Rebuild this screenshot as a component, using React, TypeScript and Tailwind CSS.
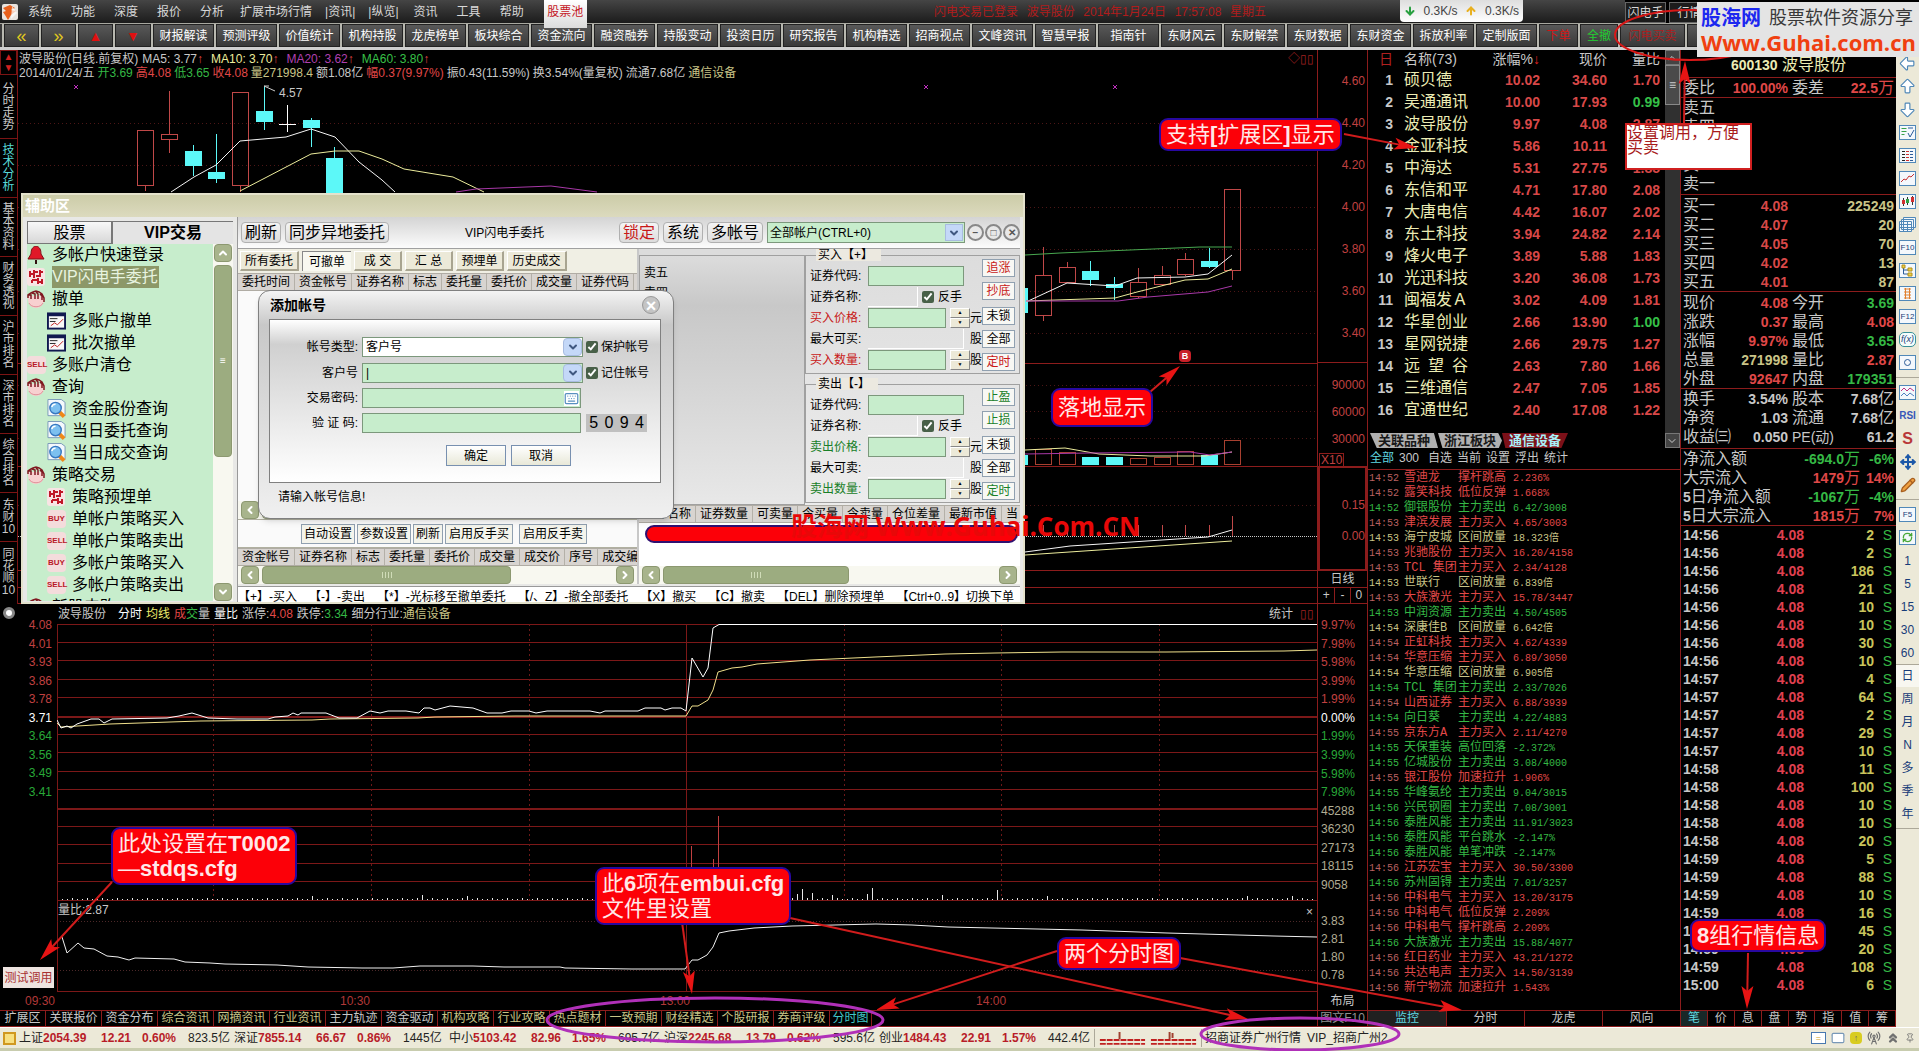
import React from 'react';
import {
  ArrowBigDown,
  ArrowBigLeft,
  ArrowBigUp,
  ArrowDown,
  ArrowUp,
  ChevronDown,
  ChevronLeft,
  ChevronRight,
  ChevronUp,
  ChevronsUp,
  Keyboard,
  Mail,
  Move,
  Pencil,
  Pin,
  RadioTower,
  RefreshCw,
} from 'lucide-react';

type Tone = 'r' | 'g' | 'y' | 'w';

const tones: Record<Tone, string> = {
  r: 'text-[#e04848]',
  g: 'text-[#35b845]',
  y: 'text-[#c9c487]',
  w: 'text-[#c8c8c8]',
};

const newsButtons = [
  '财报解读', '预测评级', '价值统计', '机构持股', '龙虎榜单', '板块综合', '资金流向', '融资融券',
  '持股变动', '投资日历', '研究报告', '机构精选', '招商视点', '文峰资讯', '智慧早报', '指南针',
  '东财风云', '东财解禁', '东财数据', '东财资金', '拆放利率', '定制版面',
];

const stocks = [
  ['硕贝德', '10.02', '34.60', '1.70'],
  ['吴通通讯', '10.00', '17.93', '0.99'],
  ['波导股份', '9.97', '4.08', '2.87'],
  ['金亚科技', '5.86', '10.11', '1.50'],
  ['中海达', '5.31', '27.75', '1.85'],
  ['东信和平', '4.71', '17.80', '2.08'],
  ['大唐电信', '4.42', '16.07', '2.02'],
  ['东土科技', '3.94', '24.82', '2.14'],
  ['烽火电子', '3.89', '5.88', '1.83'],
  ['光迅科技', '3.20', '36.08', '1.73'],
  ['闽福发Ａ', '3.02', '4.09', '1.81'],
  ['华星创业', '2.66', '13.90', '1.00'],
  ['星网锐捷', '2.66', '29.75', '1.27'],
  ['远\u2002望\u2002谷', '2.63', '7.80', '1.66'],
  ['三维通信', '2.47', '7.05', '1.85'],
  ['宜通世纪', '2.40', '17.08', '1.22'],
];

const monitor: [string, string, string, string, Tone][] = [
  ['14:52', '雪迪龙', '撑杆跳高', '2.236%', 'r'],
  ['14:52', '露笑科技', '低位反弹', '1.668%', 'r'],
  ['14:52', '御银股份', '主力卖出', '6.42/3008', 'g'],
  ['14:53', '津滨发展', '主力买入', '4.65/3003', 'r'],
  ['14:53', '海宁皮城', '区间放量', '18.323倍', 'y'],
  ['14:53', '兆驰股份', '主力买入', '16.20/4158', 'r'],
  ['14:53', 'TCL 集团', '主力买入', '2.34/4128', 'r'],
  ['14:53', '世联行', '区间放量', '6.839倍', 'y'],
  ['14:53', '大族激光', '主力买入', '15.78/3447', 'r'],
  ['14:53', '中润资源', '主力卖出', '4.50/4505', 'g'],
  ['14:54', '深康佳B', '区间放量', '6.642倍', 'y'],
  ['14:54', '正虹科技', '主力买入', '4.62/4339', 'r'],
  ['14:54', '华意压缩', '主力买入', '6.89/3050', 'r'],
  ['14:54', '华意压缩', '区间放量', '6.905倍', 'y'],
  ['14:54', 'TCL 集团', '主力卖出', '2.33/7026', 'g'],
  ['14:54', '山西证券', '主力买入', '6.88/3939', 'r'],
  ['14:54', '向日葵', '主力卖出', '4.22/4883', 'g'],
  ['14:55', '京东方A', '主力买入', '2.11/4270', 'r'],
  ['14:55', '天保重装', '高位回落', '-2.372%', 'g'],
  ['14:55', '亿城股份', '主力卖出', '3.08/4000', 'g'],
  ['14:55', '银江股份', '加速拉升', '1.906%', 'r'],
  ['14:55', '华峰氨纶', '主力卖出', '9.04/3015', 'g'],
  ['14:56', '兴民钢圈', '主力卖出', '7.08/3001', 'g'],
  ['14:56', '泰胜风能', '主力卖出', '11.91/3023', 'g'],
  ['14:56', '泰胜风能', '平台跳水', '-2.147%', 'g'],
  ['14:56', '泰胜风能', '单笔冲跌', '-2.147%', 'g'],
  ['14:56', '江苏宏宝', '主力买入', '30.50/3300', 'r'],
  ['14:56', '苏州固锝', '主力卖出', '7.01/3257', 'g'],
  ['14:56', '中科电气', '主力买入', '13.20/3175', 'r'],
  ['14:56', '中科电气', '低位反弹', '2.209%', 'r'],
  ['14:56', '中科电气', '撑杆跳高', '2.209%', 'r'],
  ['14:56', '大族激光', '主力卖出', '15.88/4077', 'g'],
  ['14:56', '红日药业', '主力买入', '43.21/1272', 'r'],
  ['14:56', '共达电声', '主力买入', '14.50/3139', 'r'],
  ['14:56', '新宁物流', '加速拉升', '1.543%', 'r'],
];

const ticks: [string, number][] = [
  ['14:56', 2], ['14:56', 2], ['14:56', 186], ['14:56', 21], ['14:56', 10], ['14:56', 10],
  ['14:56', 30], ['14:56', 10], ['14:57', 4], ['14:57', 64], ['14:57', 2], ['14:57', 29],
  ['14:57', 10], ['14:58', 11], ['14:58', 100], ['14:58', 10], ['14:58', 10], ['14:58', 20],
  ['14:59', 5], ['14:59', 88], ['14:59', 10], ['14:59', 16], ['14:59', 45], ['14:59', 20],
  ['14:59', 108], ['15:00', 6],
];

/* Latin runs are set bold and smaller than the Chinese around them */
function Mixed({ text }: { text: string }) {
  return (
    <>
      {text.split(/([!-~]+)/).map((part, i) =>
        i % 2 ? <b key={i} className="text-sm leading-none">{part}</b> : part,
      )}
    </>
  );
}

/* ---------- top bars ---------- */

function MenuBar() {
  return (
    <header className="flex h-[23px] items-center bg-gradient-to-b from-[#454545] to-[#1c1c1c] text-[#d8d8d8]">
      <svg viewBox="0 0 16 16" className="ml-[2px] size-[16px]">
        <rect width="16" height="16" rx="2" fill="#e9e4df" />
        <path d="M1 4 8 1l5 3-4 2 5 1-5 4-3 5-3-5-2-3 3-1z" fill="#e8601c" />
        <path d="m10 2 5 7-6 6z" fill="#fff" opacity=".7" />
      </svg>
      <nav className="flex items-center">
        <div className="ml-[10px] flex gap-[19px]">
          {['系统', '功能', '深度', '报价', '分析'].map((m) => <button key={m}>{m}</button>)}
        </div>
        <div className="ml-4 flex gap-[13px]">
          {['扩展市场行情', '|资讯|', '|纵览|'].map((m) => <button key={m}>{m}</button>)}
        </div>
        <div className="ml-[15px] flex gap-[19px]">
          {['资讯', '工具', '帮助'].map((m) => <button key={m}>{m}</button>)}
        </div>
      </nav>
      <button className="z-10 ml-[20px] h-[28px] w-[43px] self-start bg-gradient-to-b from-white to-[#dcdcdc] pb-1 text-[#c4141c]">股票池</button>
      <p className="mr-[134px] ml-auto flex w-[332px] justify-between text-[#b01c1c]">
        <span>闪电交易已登录</span><span>波导股份</span><span>2014年1月24日</span><span>17:57:08</span><span>星期五</span>
      </p>
      <p className="mr-[102px] flex h-[22px] w-[123px] items-center justify-around self-start rounded-b bg-gradient-to-b from-[#dedede] to-white text-[#444]">
        <ArrowDown className="size-3 text-[#28a040]" strokeWidth={4} />0.3K/s
        <ArrowUp className="size-3 text-[#e8b020]" strokeWidth={4} />0.3K/s
      </p>
      <div className="flex h-full w-[294px] gap-[3px] bg-black pt-[2px]">
        <button className="w-[41px] border border-[#666] bg-[#1c1c1c]">闪电手</button>
        <button className="w-[41px] border border-[#666] bg-[#1c1c1c]">行情</button>
      </div>
    </header>
  );
}

const barButton = 'h-[23px] shrink-0 border-l-2 border-[#b8b8b0] bg-gradient-to-b from-[#5a5a5a] to-[#383838] shadow-[inset_0_0_0_1px_#222]';

function NewsBar() {
  return (
    <nav className="flex h-[27px] overflow-hidden border-t border-b-[3px] border-t-[#a8a8a0] border-b-[#cfcfcf] bg-[#3a3a3a] pl-[2px] text-white">
      <button className={`${barButton} w-[37px] text-lg leading-none text-[#e0c820]`}>«</button>
      <button className={`${barButton} w-[37px] text-lg leading-none text-[#e0c820]`}>»</button>
      <button className={`${barButton} w-[37px] text-sm leading-none text-[#e01010]`}>▲</button>
      <button className={`${barButton} w-[38px] text-sm leading-none text-[#e01010]`}>▼</button>
      {newsButtons.map((b) => <button key={b} className={`${barButton} w-[63px]`}>{b}</button>)}
      <button className={`${barButton} w-[41px] text-[#d01818]`}>下单</button>
      <button className={`${barButton} w-[40px] text-[#20d030]`}>全撤</button>
      <button className={`${barButton} w-[67px] text-[#a82020]`}>闪电买卖</button>
      <button className={`${barButton} w-[63px] text-[#20d030]`}>跟踪</button>
    </nav>
  );
}

/* ---------- daily chart ---------- */

const sideTabs = ['技术分析', '基本资料', '财务透视', '沪市排名', '深市排名', '综合排名'];

function SideTabs() {
  return (
    <nav className="flex w-[18px] shrink-0 flex-col border-r border-[#7c1414] text-[#c8c8c8]">
      <div className="flex h-[25px] flex-col items-center justify-around border border-[#7c1414] text-[10px] leading-none text-[#d02020]">
        <span>▲</span><span>▼</span>
      </div>
      <button className="flex h-[64px] items-center justify-center border-b border-[#7c1414]"><span className="w-3 leading-3 break-all">分时走势</span></button>
      {sideTabs.map((t, i) => (
        <button key={t} className={`flex h-[59px] items-center justify-center border-b border-[#7c1414] ${i === 0 ? 'text-[#58d8d8]' : ''}`}>
          <span className="w-3 leading-3 break-all">{t}</span>
        </button>
      ))}
      <button className="flex h-[49px] items-center justify-center border-b border-[#7c1414]"><span className="w-[14px] leading-3">东财10</span></button>
      <button className="flex h-[60px] items-center justify-center"><span className="w-[14px] leading-3">同花顺10</span></button>
    </nav>
  );
}

// centre x, body top, body bottom, wick top, wick bottom, falling
type Candle = [number, number, number, number, number, boolean];

const candles: Candle[] = [
  [145, 130, 186, 130, 191, false],
  [169, 134, 140, 91, 153, false],
  [193, 151, 166, 145, 176, true],
  [216, 172, 179, 134, 183, true],
  [240, 92, 186, 92, 192, false],
  [264, 111, 122, 86, 130, true],
  [311, 120, 128, 118, 147, true],
  [334, 158, 200, 147, 200, true],
  [1019, 288, 313, 288, 313, true],
  [1043, 275, 316, 247, 321, false],
  [1067, 267, 283, 262, 283, false],
  [1090, 271, 280, 261, 286, true],
  [1114, 284, 288, 277, 300, true],
  [1138, 282, 297, 268, 298, false],
  [1162, 275, 285, 266, 286, false],
  [1185, 259, 275, 253, 276, false],
  [1209, 261, 267, 248, 268, true],
  [1232, 189, 271, 189, 280, false],
];

const volumes: [number, number, boolean][] = [
  [1019, 455, true], [1043, 449, false], [1067, 452, false], [1090, 457, true], [1114, 457, true],
  [1138, 458, false], [1162, 457, false], [1185, 451, false], [1209, 455, true], [1232, 440, false],
];

function DailyChart() {
  return (
    <svg viewBox="18 50 1299 554" preserveAspectRatio="none" className="absolute inset-0 size-full" fill="none" shapeRendering="crispEdges">
      <g stroke="#4c1616" strokeDasharray="1 3">
        {[123, 165, 207, 249, 291, 333, 385, 411, 438, 505].map((y) => <path key={y} d={`M18 ${y + 0.5}H1317`} />)}
      </g>
      <path d="M18 363.5H1317M18 466.5H1317M18 570.5H1317M18 587.5H1317M18 603.5H1317" stroke="#8c1c1c" />
      <path d="M18 536.5H1317" stroke="#c8c8c8" strokeDasharray="1 1" />
      {candles.map(([x, top, bottom, high, low, down]) => (
        <g key={x} stroke={down ? '#5cf8f8' : '#c04848'}>
          <path d={`M${x + 0.5} ${high}V${top}M${x + 0.5} ${bottom}V${low}`} />
          <rect x={x - 7.5} y={top + 0.5} width="16" height={bottom - top - 1} fill={down ? '#5cf8f8' : 'none'} />
        </g>
      ))}
      <path d="M287.5 105V132M279 124.5H296" stroke="#fff" />
      {volumes.map(([x, top, down]) => (
        <rect key={x} x={x - 7.5} y={top + 0.5} width="16" height={465 - top - 1} stroke={down ? '#5cf8f8' : '#a84030'} fill={down ? '#5cf8f8' : 'none'} />
      ))}
      <path d="M1043.5 525V536M1067.5 525V536M1090.5 525V536M1114.5 525V536M1138.5 525V536M1162.5 525V536M1185.5 525V536M1209.5 525V536M1232.5 516V536" stroke="#c04848" />
      <g shapeRendering="auto">
        <path d="M171 192 194 177 216 165 240 141 286 137 311 129 335 137 359 162 382 180 395 192M1026 302 1067 283 1115 286 1137 278 1185 277 1208 274 1232 255M1025 552 1070 546 1208 537 1232 530" stroke="#f4f4f4" />
        <path d="M240 191 265 178 311 154 335 151H359L382 159 404 169 453 177 484 192M1026 301 1115 298 1137 292 1185 280 1208 279 1232 269M1025 450 1065 448 1099 454 1150 456H1205L1232 452M1025 555 1232 541" stroke="#ecec9c" />
        <path d="M456 192 476 189 551 186 597 192M1026 301H1118L1148 297 1208 292 1232 286M1025 454 1090 453 1190 452 1210 455 1232 452" stroke="#a838a8" />
        <path d="M1025 255 1060 253 1130 250 1200 247H1232" stroke="#48a850" />
        <path d="M264 86 275 91M264 86 269 86" stroke="#ccc" />
      </g>
      <path d="m74 85 4 4m0-4-4 4M924 85l4 4m0-4-4 4M1113 85l4 4m0-4-4 4" stroke="#c030c0" />
    </svg>
  );
}

const up = <span className="mr-2 text-[#e04848]">↑</span>;

function DailyPanel() {
  return (
    <section className="flex h-[554px]">
      <SideTabs />
      <div className="relative min-w-0 flex-1">
        <DailyChart />
        <div className="relative pt-[2px] pl-[1px] leading-[14px] text-[#c8c8c8]">
          <p className="flex"><span className="mr-1">波导股份(日线.前复权)</span> MA5: 3.77{up}
            <span className="text-[#ecec9c]">MA10: 3.70</span>{up}
            <span className="text-[#b040b0]">MA20: 3.62</span>{up}
            <span className="text-[#38c048]">MA60: 3.80</span>{up}
          </p>
          <p className="flex gap-[3px]">
            <span>2014/01/24/五</span>
            <span className={tones.g}>开3.69</span>
            <span className={tones.r}>高4.08</span>
            <span className={tones.g}>低3.65</span>
            <span className={tones.r}>收4.08</span>
            <span className={tones.y}>量271998.4</span>
            <span>额1.08亿</span>
            <span className={tones.r}>幅0.37(9.97%)</span>
            <span>振0.43(11.59%)</span>
            <span>换3.54%(量复权)</span>
            <span>流通7.68亿</span>
            <span className={tones.y}>通信设备</span>
          </p>
        </div>
        <span className="absolute top-[35px] left-[261px] text-[#c8c8c8]">4.57</span>
        <span className="absolute top-[1px] right-[3px] text-[#a02020]">◇▯▯</span>
        <span className="absolute top-[300px] right-[126px] size-[12px] rounded-sm bg-[#c82028] text-center text-[9px] leading-[12px] font-bold text-white">B</span>
      </div>
      <div className="flex w-[51px] shrink-0 flex-col border-x border-[#8c1c1c] text-right text-[#c04040]">
        <div className="h-[313px] border-b border-[#8c1c1c] pt-[10px]">
          {['4.60', '4.40', '4.20', '4.00', '3.80', '3.60', '3.40'].map((v) => <p key={v} className="h-[42px] pr-[2px] leading-[42px]">{v}</p>)}
        </div>
        <div className="h-[103px] pt-[9px]">
          {['90000', '60000', '30000'].map((v) => <p key={v} className="h-[27px] pr-[2px] leading-[27px]">{v}</p>)}
          <span className="float-left ml-[1px] border border-[#8c1c1c] px-[1px] leading-[13px]">X10</span>
        </div>
        <div className="flex h-[105px] flex-col gap-[15px] border-2 border-[#8c1c1c] pt-[29px] leading-4">
          <span>0.15</span><span>0.00</span>
        </div>
        <button className="h-[16px] text-[#c8c8c8]">日线</button>
        <div className="grid h-[17px] grid-cols-3 border-y border-[#8c1c1c] leading-[15px] text-[#c8c8c8]">
          <button>+</button><button className="border-x border-[#8c1c1c]">-</button><button>0</button>
        </div>
      </div>
    </section>
  );
}

/* ---------- intraday chart ---------- */

const priceLine =
  '57,720 61,728 67,726 71,728 77,724 91,719 99,719 104,723 112,719 167,718 179,716 192,713 208,718 237,719 268,719 275,717 288,716 293,713 298,715 301,713 326,713 339,718 357,718 370,711 380,713 388,711 406,711 419,713 424,708 430,708 435,710 450,706 473,708 487,713 502,713 511,711 529,711 536,713 547,711 590,711 600,713 605,711 638,711 645,708 661,708 665,710 672,708 681,708 686,711 692,658 703,677 708,668 713,628 719,624.5 1317,624.5';
const averageLine =
  '57,723 61,727 94,725 110,724 200,721 312,720 330,719 418,718 435,717 516,716 686,716 692,706 698,706 708,700 713,690 718,672 732,668 742,667 757,664 810,660 875,657 945,654 995,653 1062,652 1166,652 1284,651 1317,650';
const ratioLine =
  '62,937 67,953 78,943 84,948 94,949 107,956 118,957 129,960 135,958 174,959 185,962 210,963 225,964 277,965 308,967 362,968 393,968 420,966 473,966 504,967 560,967 565,968 632,969 685,969 692,960 698,960 707,955 713,947 719,933 729,931 754,928 792,926 876,924 912,925 948,927 992,928 1082,930 1167,933 1238,935 1274,936 1317,937';
const volumeSpikes: Record<number, number> = { 797: 6, 802: 11, 812: 7, 832: 5, 872: 12, 867: 6, 942: 5, 997: 10, 1047: 4, 1247: 4, 1292: 4, 312: 4, 422: 5, 467: 4 };

function IntradayChart() {
  const bars = Array.from({ length: 251 }, (_, i) => 62 + i * 5);
  return (
    <svg viewBox="57 604 1260 388" preserveAspectRatio="none" className="absolute inset-0 size-full" fill="none" shapeRendering="crispEdges">
      <g stroke="#7c1818">
        {[624, 642, 660, 679, 697, 734, 752, 771, 789, 826, 844, 863, 881, 900].map((y) => <path key={y} d={`M57 ${y + 0.5}H1317`} />)}
        <path d="M686.5 624V992M57.5 624V992M57 991.5H1317" />
      </g>
      <path d="M57 717H1317M57 809H1317" stroke="#7c1818" strokeWidth="2" />
      <g stroke="#6c1818" strokeDasharray="2 3">
        {[213, 371, 529, 844, 1001, 1159].map((x) => <path key={x} d={`M${x + 0.5} 624V900`} />)}
      </g>
      <path d="M57 921.5H1317M57 970.5H1317" stroke="#4c2828" strokeDasharray="1 2" />
      {bars.map((x) => <path key={x} d={`M${x + 0.5} ${900 - (volumeSpikes[x] ?? (x % 3 ? 1 : 2))}V900`} stroke="#e8e8e8" />)}
      <path d="M691.5 846V900M713.5 859V900M718.5 816V900" stroke="#c04040" />
      <polyline points={averageLine} stroke="#f0e08c" shapeRendering="auto" />
      <polyline points={priceLine} stroke="#fff" shapeRendering="auto" />
      <polyline points={ratioLine} stroke="#f0f0f0" shapeRendering="auto" />
    </svg>
  );
}

const leftScale = ['4.08', '4.01', '3.93', '3.86', '3.78', '3.71', '3.64', '3.56', '3.49', '3.41'];
const rightScale = ['9.97%', '7.98%', '5.98%', '3.99%', '1.99%', '0.00%', '1.99%', '3.99%', '5.98%', '7.98%'];
const scaleTone = (i: number) => (i < 5 ? 'text-[#c04040]' : i === 5 ? 'text-white' : 'text-[#28a838]');

function IntradayPanel() {
  return (
    <section className="flex h-[388px]">
      <div className="flex w-[57px] shrink-0 flex-col pr-[5px] text-right">
        <span className="ml-[3px] flex h-[12px] w-[12px] items-start pt-[3px]"><i className="size-[12px] shrink-0 rounded-full border-[3px] border-[#888] bg-white" /></span>
        <div className="flex h-[185px] flex-col">
          {leftScale.map((v, i) => <p key={v} className={`flex flex-1 items-center justify-end ${scaleTone(i)}`}>{v}</p>)}
        </div>
        <button className="mt-[166px] ml-[3px] h-[21px] w-[51px] bg-[#eee4e0] text-center text-[#a83030]">测试调用</button>
      </div>
      <div className="relative min-w-0 flex-1 text-[#c8c8c8]">
        <IntradayChart />
        <p className="relative flex h-5 items-center gap-1 pl-[1px]">
          <span className="mr-2">波导股份</span>
          <span className="text-white">分时</span>
          <span className="text-[#ecec6c]">均线</span>
          <span><span className={tones.r}>成</span><span className={tones.g}>交</span>量</span>
          <span className="text-white">量比</span>
          <span>涨停:<span className={tones.r}>4.08</span></span>
          <span>跌停:<span className={tones.g}>3.34</span></span>
          <span>细分行业:<span className={tones.y}>通信设备</span></span>
          <button className="ml-auto">统计</button>
          <span className="mr-[3px] ml-[3px] text-[#a02020]">▯▯</span>
        </p>
        <p className="absolute top-[298px] left-[1px]">量比:2.87</p>
        <button className="absolute top-[300px] right-[4px]">×</button>
      </div>
      <div className="w-[51px] shrink-0 border-x border-[#8c1c1c] pt-[12px] pl-[3px]">
        <div className="flex h-[278px] flex-col text-[#b0ac94]">
          {rightScale.map((v, i) => <p key={i} className={`flex flex-1 items-center ${scaleTone(i)}`}>{v}</p>)}
          {['45288', '36230', '27173', '18115', '9058'].map((v) => <p key={v} className="flex flex-1 items-center">{v}</p>)}
        </div>
        <div className="mt-[18px] text-[#b0ac94]">
          {['3.83', '2.81', '1.80', '0.78'].map((v) => <p key={v} className="h-[18px] leading-[18px]">{v}</p>)}
        </div>
      </div>
    </section>
  );
}

const pageTabs: [string, string][] = [
  ['关联报价', 'text-[#c8c8c8]'], ['资金分布', 'text-[#c8c8c8]'], ['综合资讯', 'text-[#c9c487]'],
  ['网摘资讯', 'text-[#c9c487]'], ['行业资讯', 'text-[#c9c487]'], ['主力轨迹', 'text-[#c8c8c8]'],
  ['资金驱动', 'text-[#c8c8c8]'], ['机构攻略', 'text-[#c9c487]'], ['行业攻略', 'text-[#c9c487]'],
  ['热点题材', 'text-[#c9c487]'], ['一致预期', 'text-[#c9c487]'], ['财经精选', 'text-[#c9c487]'],
  ['个股研报', 'text-[#c9c487]'], ['券商评级', 'text-[#c9c487]'],
];

function ChartFooter() {
  return (
    <>
      <div className="flex h-[18px] items-center text-[#b03838]">
        <span className="w-[315px] pl-[25px]">09:30</span>
        <span className="w-[25px] grow-0 pl-[25px]">10:30</span>
        <span className="ml-[320px]">13:00</span>
        <span className="ml-[286px]">14:00</span>
        <button className="ml-auto h-full w-[51px] border-x border-[#8c1c1c] text-[#c8c8c8]">布局</button>
      </div>
      <nav className="flex h-[17px] border-y border-[#8c1c1c] leading-[15px] text-[#c8c8c8]">
        <button className="w-[45px]">扩展区</button>
        {pageTabs.map(([t, tone]) => <button key={t} className={`w-[56px] border-l border-[#8c1c1c] ${tone}`}>{t}</button>)}
        <button className="w-[43px] border-x border-[#8c1c1c] text-[#40c8c8]">分时图</button>
        <button className="ml-auto w-[51px] border-x border-[#8c1c1c] text-[#909090]">图文F10</button>
      </nav>
    </>
  );
}

/* ---------- stock list ---------- */

function StockList() {
  return (
    <section className="flex w-[312px] shrink-0 flex-col">
      <div className="flex h-[398px]">
        <div className="flex flex-1 flex-col">
          <table className="w-[292px] table-fixed text-right">
            <colgroup><col className="w-[25px]" /><col className="w-[87px]" /><col className="w-[60px]" /><col className="w-[67px]" /><col className="w-[53px]" /></colgroup>
            <thead className="text-sm text-[#c8c8c8]">
              <tr className="h-[19px] leading-[19px]">
                <th className="font-normal text-[#b02020]">日</th>
                <th className="pl-[11px] text-left font-normal">名称(73)</th>
                <th className="font-normal whitespace-nowrap">涨幅%<span className="text-[#e02020]">↓</span></th>
                <th className="font-normal">现价</th>
                <th className="font-normal">量比</th>
              </tr>
            </thead>
            <tbody className="text-sm font-bold text-[#d84848]">
              {stocks.map(([name, change, price, ratio], i) => (
                <tr key={name} className="h-[22px] leading-[22px]">
                  <td className="text-[#c8c8c8]">{i + 1}</td>
                  <td className="pl-[11px] text-left text-base leading-[22px] font-normal text-[#ececb4]">{name}</td>
                  <td>{change}</td>
                  <td>{price}</td>
                  <td className={Number(ratio) > 1 ? '' : 'text-[#35c048]'}>{ratio}</td>
                </tr>
              ))}
            </tbody>
          </table>
          <nav className="mt-auto flex h-[15px] pl-[2px] text-[13px] leading-[15px] font-bold">
            <button className="h-[15px] w-[68px] bg-[#b0b0b0] text-[#181818] [clip-path:polygon(0_0,94%_0,100%_100%,10%_100%)]">关联品种</button>
            <button className="h-[15px] w-[64px] bg-[#b0b0b0] text-[#181818] [clip-path:polygon(0_0,94%_0,100%_50%,95%_100%,7%_100%)]">浙江板块</button>
            <button className="h-[15px] w-[66px] bg-[#7c1018] text-[#a8f0f8] [clip-path:polygon(0_0,100%_0,90%_100%,5%_100%)]">通信设备</button>
          </nav>
        </div>
        <div className="flex w-[15px] flex-col justify-between bg-[#303030]">
          <div>
            <button aria-label="上翻" className="block h-[15px] w-full border border-[#777] bg-[#444] text-[#ccc]"><ChevronUp className="size-3" /></button>
            <div className="flex h-[40px] items-center justify-center border border-[#888] bg-[#4a4a4a] text-[#ccc]">≡</div>
          </div>
          <button aria-label="下翻" className="h-[15px] border border-[#777] bg-[#444] text-[#ccc]"><ChevronDown className="size-3" /></button>
        </div>
      </div>
      <nav className="flex h-[22px] items-center gap-[5px] border-b border-[#8c1c1c] pb-[2px] pl-[2px] text-[#c8c8c8]">
        <button className="text-[#60d8e0]">全部</button><button className="mr-1">300</button>
        {['自选', '当前', '设置', '浮出', '统计'].map((t) => <button key={t}>{t}</button>)}
      </nav>
      <table className="mt-[1px] mr-auto w-[280px] table-fixed font-['Liberation_Mono','Noto_Sans_CJK_SC',monospace]">
        <colgroup><col className="w-[36px]" /><col className="w-[54px]" /><col className="w-[55px]" /><col /></colgroup>
        <tbody>
          {monitor.map(([time, name, action, value, tone], i) => (
            <tr key={i} className={`h-[15px] leading-[15px] whitespace-nowrap ${tones[tone]}`}>
              <td className={`pl-[1px] text-[10px] ${tone === 'r' ? 'text-[#b86060]' : ''}`}>{time}</td>
              <td>{name}</td>
              <td>{action}</td>
              <td className="text-[10px]">{value}</td>
            </tr>
          ))}
        </tbody>
      </table>
      <nav className="mt-auto grid h-[17px] grid-cols-4 border-y border-[#8c1c1c] leading-[15px] text-[#c8c8c8]">
        <button className="bg-[#202020] text-[#60d8e0]">监控</button>
        {['分时', '龙虎', '风向'].map((t) => <button key={t} className="border-l border-[#8c1c1c]">{t}</button>)}
      </nav>
    </section>
  );
}

/* ---------- quote panel ---------- */

const bids = [['买一', '4.08', '225249'], ['买二', '4.07', '20'], ['买三', '4.05', '70'], ['买四', '4.02', '13'], ['买五', '4.01', '87']];

type Pair = [string, string, Tone, string, string, Tone];

const stats: Pair[] = [
  ['现价', '4.08', 'r', '今开', '3.69', 'g'],
  ['涨跌', '0.37', 'r', '最高', '4.08', 'r'],
  ['涨幅', '9.97%', 'r', '最低', '3.65', 'g'],
  ['总量', '271998', 'y', '量比', '2.87', 'r'],
  ['外盘', '92647', 'r', '内盘', '179351', 'g'],
];
const shares: Pair[] = [
  ['换手', '3.54%', 'w', '股本', '7.68亿', 'w'],
  ['净资', '1.03', 'w', '流通', '7.68亿', 'w'],
  ['收益㈢', '0.050', 'w', 'PE(动)', '61.2', 'w'],
];
const flows: [string, string, string, Tone][] = [
  ['净流入额', '-694.0万', '-6%', 'g'],
  ['大宗流入', '1479万', '14%', 'r'],
  ['5日净流入额', '-1067万', '-4%', 'g'],
  ['5日大宗流入', '1815万', '7%', 'r'],
];

function PairRow({ row }: { row: Pair }) {
  const [a, av, at, b, bv, bt] = row;
  return (
    <div className="flex h-[19px] items-center whitespace-nowrap">
      <span className="w-[40px]">{a}</span>
      <span className={`w-[65px] text-right ${tones[at]}`}><Mixed text={av} /></span>
      <span className="ml-[4px]">{b === 'PE(动)' ? <span className="text-sm">{b}</span> : b}</span>
      <span className={`ml-auto ${tones[bt]}`}><Mixed text={bv} /></span>
    </div>
  );
}

function QuotePanel() {
  return (
    <section className="flex w-[216px] shrink-0 flex-col border-l border-[#8c1c1c] text-base leading-[19px] text-[#c8c8c8]">
      <h2 className="h-[28px] border-b border-[#8c1c1c] pt-[5px] text-center text-[#ececb4]"><Mixed text="600130 波导股份" /></h2>
      <div className="h-[20px] border-b border-[#8c1c1c] px-[2px]"><PairRow row={['委比', '100.00%', 'r', '委差', '22.5万', 'r']} /></div>
      <div className="border-b border-[#8c1c1c] px-[2px] pb-[1px]">
        {['卖五', '卖四', '卖三', '卖二', '卖一'].map((s) => <p key={s} className="h-[19px]">{s}</p>)}
      </div>
      <div className="border-b border-[#8c1c1c] px-[2px] pt-[1px]">
        {bids.map(([label, price, amount]) => (
          <div key={label} className="flex h-[19px]">
            <span className="w-[40px]">{label}</span>
            <span className="w-[65px] text-right text-[#d84848]"><Mixed text={price} /></span>
            <span className="ml-auto text-[#c9c487]"><Mixed text={amount} /></span>
          </div>
        ))}
      </div>
      <div className="border-b border-[#8c1c1c] px-[2px] pt-[1px]">{stats.map((r) => <PairRow key={r[0]} row={r} />)}</div>
      <div className="border-b border-[#8c1c1c] px-[2px] pb-[2px]">{shares.map((r) => <PairRow key={r[0]} row={r} />)}</div>
      <div className="border-b border-[#8c1c1c] px-[2px]">
        {flows.map(([label, amount, pct, tone]) => (
          <div key={label} className="flex h-[19px] items-center">
            <span><Mixed text={label} /></span>
            <span className={`ml-auto ${tones[tone]}`}><Mixed text={amount} /></span>
            <span className={`w-[34px] text-right ${tones[tone]}`}><Mixed text={pct} /></span>
          </div>
        ))}
      </div>
      <table className="w-full table-fixed text-right text-sm font-bold">
        <colgroup><col className="w-[55px]" /><col className="w-[68px]" /><col className="w-[70px]" /><col /></colgroup>
        <tbody>
          {ticks.map(([time, amount], i) => (
            <tr key={i} className="h-[18px] leading-[18px]">
              <td className="pl-[2px] text-left">{time}</td>
              <td className="text-[#e04050]">4.08</td>
              <td className="text-[#c9c45c]">{amount}</td>
              <td className="pr-[4px] font-normal text-[#35b845]">S</td>
            </tr>
          ))}
        </tbody>
      </table>
      <nav className="mt-auto grid h-[17px] grid-cols-8 border-y border-[#8c1c1c] text-xs leading-[15px]">
        {['笔', '价', '息', '盘', '势', '指', '值', '筹'].map((t, i) => (
          <button key={t} className={`border-r border-[#8c1c1c] ${i === 0 ? 'bg-[#182828] text-[#60d8e0]' : ''}`}>{t}</button>
        ))}
      </nav>
    </section>
  );
}

/* ---------- tool strip ---------- */

function Boxed({ children }: { children: React.ReactNode }) {
  return (
    <svg viewBox="0 0 17 15" className="h-[15px] w-[17px]" fill="none" stroke="#2c5c98">
      <rect x=".5" y=".5" width="16" height="14" fill="#f4f8fc" stroke="#5088b8" />
      {children}
    </svg>
  );
}

function BoxedText({ children }: { children: string }) {
  return <span className="w-[17px] border border-[#5088b8] bg-[#f4f8fc] text-center text-[8px] leading-[13px] text-[#183c78]">{children}</span>;
}

const bigArrow = 'size-[19px] fill-white text-[#5088b8]';

const toolIcons: [string, React.ReactNode][] = [
  ['后退', <ArrowBigLeft className={bigArrow} strokeWidth={1.5} />],
  ['上移', <ArrowBigUp className={bigArrow} strokeWidth={1.5} />],
  ['下移', <ArrowBigDown className={bigArrow} strokeWidth={1.5} />],
  ['报告', <Boxed><path d="M2.5 3.5h5m-5 3h5m-5 3h3" stroke="#38a048" /><path d="m9 8 2 4 4-7m-6-2h5" /></Boxed>],
  ['列表', <Boxed><path d="M3 3.5h3m-3 3h3m-3 3h3m-3 3h3" stroke="#222" /><path d="M7 3.5h3m-3 3h3m-3 3h3m-3 3h3" stroke="#d03030" /><path d="M11 3.5h3m-3 3h3m-3 3h3m-3 3h3" /></Boxed>],
  ['分时图', <Boxed><path d="m2 11 3-3 2 1 3-4 2 1 3-3" stroke="#c83030" /></Boxed>],
  ['K线图', <Boxed><path d="M4.5 4v8M8.5 3v8M13.5 2v9" stroke="#333" /><path d="M3 6h3v4H3z" fill="#d03030" stroke="none" /><path d="M7 5h3v4H7z" fill="#30a040" stroke="none" /><path d="M12 3h3v5h-3z" fill="#d03030" stroke="none" /></Boxed>],
  ['多窗口', (
    <svg viewBox="0 0 17 15" className="h-[15px] w-[17px]" fill="#f4f8fc" stroke="#5088b8">
      <path d="M4.5.5h12v10h-12zM2.500 2.500h12v10h-12zM.5 4.500h12v10H.5zM.5 7.500h12m-12 3h12M4.500 5v9M8.500 5v9" />
    </svg>
  )],
  ['F10', <BoxedText>F10</BoxedText>],
  ['结构', <Boxed><path d="M4.500 3v8h5m-5-4h5" /><path d="M3 2h3v3H3zM9 5h4v3H9zM9 10h4v3H9z" fill="#f0d040" stroke="#b09020" /></Boxed>],
  ['资讯', <Boxed><path d="M5 3h7M5 6h7M5 9h7M5 12h7M6.500 2v11M10.500 2v11" stroke="#e08030" /></Boxed>],
  ['F12', <BoxedText>F12</BoxedText>],
  ['公式', <span className="w-[17px] rounded-[5px] border border-[#389098] bg-[#f4fcfc] text-center text-[9px] leading-[13px] text-[#183c78] italic">f(x)</span>],
  ['圆', <Boxed><circle cx="8.500" cy="7.500" r="3" /></Boxed>],
];

const periods = ['1', '5', '15', '30', '60', '日', '周', '月', 'N', '多', '季', '年'];

function ToolStrip() {
  const cell = 'flex h-[23px] w-full items-center justify-center';
  return (
    <aside className="flex w-[23px] shrink-0 flex-col bg-[#ece9d8] pt-[2px] text-[#183c78]">
      {toolIcons.map(([label, icon]) => <button key={label} aria-label={label} className={cell}>{icon}</button>)}
      <hr className="my-[3px] border-[#aca899]" />
      <button aria-label="指标" className={cell}><Boxed><path d="m2 6 3-3 3 3 3-3 4 3" stroke="#c03080" /><path d="m2 11 3-3 3 3 3-3 4 3" stroke="#5080c0" /></Boxed></button>
      <button className={`${cell} text-[10px] font-bold text-[#3858b8]`}>RSI</button>
      <button className={`${cell} text-base font-bold text-[#b83838]`}>S</button>
      <button aria-label="移动" className={cell}><Move className="size-4 text-[#1c58a8]" strokeWidth={3} /></button>
      <button aria-label="画线" className={cell}><Pencil className="size-4 fill-[#f0a040] text-[#a86020]" /></button>
      <hr className="my-[3px] border-[#aca899]" />
      <button aria-label="F5" className={cell}><BoxedText>F5</BoxedText></button>
      <button aria-label="刷新" className={cell}><RefreshCw className="h-[15px] w-[17px] border border-[#5088b8] bg-[#f4f8fc] p-px text-[#48a838]" strokeWidth={3} /></button>
      {periods.map((p) => (
        <button key={p} className={`${cell} ${p === '日' ? 'border-t border-[#aca899] bg-[#f8f7f0]' : ''}`}>{p}</button>
      ))}
      <hr className="mt-[3px] border-[#aca899]" />
    </aside>
  );
}

/* ---------- order window ---------- */

function BellIcon() {
  return (
    <svg viewBox="0 0 18 18" className="size-[18px]">
      <path d="M9 0c4 1 5 4 5 8l3 5H1l3-5c0-4 1-7 5-8z" fill="#e01828" stroke="#801018" />
      <path d="M8 14h2v4H8z" fill="#301010" />
    </svg>
  );
}

function FlashIcon() {
  return (
    <svg viewBox="0 0 18 18" className="size-[18px]">
      <rect width="18" height="18" rx="3" fill="#f8e4e4" />
      <path d="M3 3v6M3 6h4M7 2v8M7 4h4M13 4h3M13 2v7M9 8h4M5 12h6M5 12v3M11 10v6M11 14h4M15 11v5" stroke="#c01828" strokeWidth="2" fill="none" />
    </svg>
  );
}

function HandIcon() {
  return (
    <svg viewBox="0 0 18 18" className="size-[18px]">
      <path d="M1 10a8 8 0 0 0 16 0V6H1z" fill="#f8d0d0" />
      <path d="M1 8V5l3-2 2-1 3-1 3 1 3 2 2 4v4M1 5h3v4M5 3l3 1v5M9 2l2 2v5M13 4l2 2v4" stroke="#801820" strokeWidth="1.500" fill="none" />
      <path d="M2 13c2 5 12 5 14 0" stroke="#e09098" fill="none" />
    </svg>
  );
}

function FormIcon() {
  return (
    <svg viewBox="0 0 20 18" className="h-[18px] w-[20px]">
      <path d="M0 0h20v18H0z" fill="#101850" />
      <path d="M2 4h16v12H2z" fill="#f8f8f8" />
      <path d="M3 6.500h8m-8 3h6" stroke="#222" />
      <path d="m4 14 4-3 3 2 6-6" stroke="#c02020" fill="none" />
    </svg>
  );
}

function SearchIcon() {
  return (
    <svg viewBox="0 0 20 20" className="size-[20px]">
      <path d="M1 0h14l4 3v14H1z" fill="#f4f8fc" stroke="#7898b8" />
      <path d="m13 13 5 5" stroke="#f08818" strokeWidth="4" />
      <circle cx="9" cy="9" r="6" fill="#7cc0f0" stroke="#3878c0" strokeWidth="1.500" />
      <path d="M5 8a4 4 0 0 1 4-3" stroke="#fff" strokeWidth="1.500" fill="none" />
    </svg>
  );
}

function Tag({ children }: { children: string }) {
  return <span className="w-[19px] rounded-sm bg-[#f4dcdc] text-center text-[8px] leading-[18px] font-bold text-[#b81828]">{children}</span>;
}

const tree: [React.ReactNode, string, boolean][] = [
  [<BellIcon />, '多帐户快速登录', false],
  [<FlashIcon />, 'VIP闪电手委托', false],
  [<HandIcon />, '撤单', false],
  [<FormIcon />, '多账户撤单', true],
  [<FormIcon />, '批次撤单', true],
  [<Tag>SELL</Tag>, '多账户清仓', false],
  [<HandIcon />, '查询', false],
  [<SearchIcon />, '资金股份查询', true],
  [<SearchIcon />, '当日委托查询', true],
  [<SearchIcon />, '当日成交查询', true],
  [<HandIcon />, '策略交易', false],
  [<FlashIcon />, '策略预埋单', true],
  [<Tag>BUY</Tag>, '单帐户策略买入', true],
  [<Tag>SELL</Tag>, '单帐户策略卖出', true],
  [<Tag>BUY</Tag>, '多帐户策略买入', true],
  [<Tag>SELL</Tag>, '多帐户策略卖出', true],
  [<HandIcon />, '新股申购', false],
];

const scrollButton = 'flex size-[18px] shrink-0 items-center justify-center rounded-sm border border-[#8c9870] bg-[#a8b48c] text-white';

function TreePane() {
  return (
    <div className="flex w-[206px] shrink-0 flex-col">
      <div className="mt-[4px] flex h-[23px] text-base leading-[18px]">
        <button className="w-[85px] border border-[#777] bg-gradient-to-b from-[#f8f8f8] to-[#d8d8d8]">股票</button>
        <button className="flex-1 border-t border-l border-[#777] bg-[#e4e4e4] font-bold">VIP交易</button>
      </div>
      <div className="flex h-[357px] overflow-hidden">
        <ul className="flex-1 overflow-hidden bg-[#c7edcc] text-base leading-[22px] whitespace-nowrap">
          {tree.map(([icon, label, child], i) => (
            <li key={label} className={`flex h-[22px] items-center gap-[6px] ${child ? 'pl-[20px]' : ''}`}>
              <span className="flex w-[19px] items-center">{icon}</span>
              <a href="#" className={i === 1 ? 'bg-[#8c9868] pr-px text-[#e8f4e0]' : ''}>{label}</a>
            </li>
          ))}
        </ul>
        <div className="flex w-[20px] flex-col items-center bg-[#f8f8f0]">
          <button aria-label="向上" className={scrollButton}><ChevronUp className="size-3" strokeWidth={4} /></button>
          <div className="mt-[3px] flex h-[192px] w-[18px] items-center justify-center rounded-sm border border-[#8c9870] bg-[#9cac80] text-[10px] text-white">≡</div>
          <button aria-label="向下" className={`${scrollButton} mt-auto`}><ChevronDown className="size-3" strokeWidth={4} /></button>
        </div>
      </div>
    </div>
  );
}

function HScroll({ thumb }: { thumb: string }) {
  return (
    <div className="flex h-[18px] items-center bg-[#f8f8f0] px-[3px]">
      <button aria-label="向左" className={scrollButton}><ChevronLeft className="size-3" strokeWidth={4} /></button>
      <div className={`ml-[3px] flex h-[18px] items-center justify-center gap-[2px] rounded-sm border border-[#8c9870] bg-[#9cac80] ${thumb}`}>
        {[0, 1, 2, 3].map((i) => <i key={i} className="h-[6px] w-px bg-[#d0dcb8]" />)}
      </div>
      <button aria-label="向右" className={`${scrollButton} ml-auto`}><ChevronRight className="size-3" strokeWidth={4} /></button>
    </div>
  );
}

function HeaderRow({ cols }: { cols: string[] }) {
  return (
    <div className="h-[18px] overflow-hidden border-y border-[#b0aca4] bg-[#d8d4d0]">
      <table>
        <thead>
          <tr className="h-[16px] leading-[16px]">
            {cols.map((c) => <th key={c} className="border-r border-[#b4b0a8] px-1 font-normal whitespace-nowrap">{c}</th>)}
          </tr>
        </thead>
      </table>
    </div>
  );
}

const bigButton = 'h-[21px] rounded-sm border border-[#b0b0b0] bg-gradient-to-b from-[#f4f4f4] to-[#dcdcdc] text-base leading-[18px]';
const orderTab = 'h-[20px] border-t border-r-2 border-b-2 border-l border-t-white border-r-[#a8a490] border-b-[#a8a490] border-l-white bg-[#ece9d8]';
const flatButton = 'h-[20px] border border-[#90a0b0] bg-[#f4f4ec]';

function OrdersPane() {
  return (
    <div className="flex w-[401px] shrink-0 flex-col border-r-2 border-[#c8c8c8] bg-[#fafafa]">
      <div className="flex h-[24px] gap-[3px] bg-[#f0efe4] pt-[2px] pl-[2px]">
        <button className={`${orderTab} w-[59px]`}>所有委托</button>
        <button className="h-[20px] w-[49px] border-t border-l border-[#888] bg-[#f8f8f0]">可撤单</button>
        <button className={`${orderTab} w-[48px]`}>成 交</button>
        <button className={`${orderTab} w-[48px]`}>汇 总</button>
        <button className={`${orderTab} w-[48px]`}>预埋单</button>
        <button className={`${orderTab} w-[60px]`}>历史成交</button>
      </div>
      <HeaderRow cols={['委托时间', '资金帐号', '证券名称', '标志', '委托量', '委托价', '成交量', '证券代码']} />
      <div className="h-[210px]" />
      <HScroll thumb="w-[249px]" />
      <div className="flex h-[29px] items-center gap-[2px] border-y border-[#b0b0a0] pl-[63px]">
        <button className={`${flatButton} w-[54px]`}>自动设置</button>
        <button className={`${flatButton} w-[54px]`}>参数设置</button>
        <button className={`${flatButton} w-[30px]`}>刷新</button>
        <button className={`${flatButton} w-[68px]`}>启用反手买</button>
        <button className={`${flatButton} ml-[4px] w-[68px]`}>启用反手卖</button>
      </div>
      <HeaderRow cols={['资金帐号', '证券名称', '标志', '委托量', '委托价', '成交量', '成交价', '序号', '成交编']} />
      <HScroll thumb="w-[249px]" />
    </div>
  );
}

const entry = 'h-[20px] border border-[#7c987c] bg-[#c7edcc] px-1 outline-none';

function Spinner() {
  return (
    <span className="ml-[4px] flex w-[20px] flex-col text-[5px]">
      <button className="h-[10px] border border-r-[#888] border-b-[#888] border-l-white border-t-white bg-[#ece9d8] leading-none">▲</button>
      <button className="h-[10px] border border-r-[#888] border-b-[#888] border-l-white border-t-white bg-[#ece9d8] leading-none">▼</button>
    </span>
  );
}

interface OrderFormProps {
  id: string;
  title: string;
  verb: string;
  tone: string;
  quick: [string, string];
  short: string;
}

function OrderForm({ id, title, verb, tone, quick, short }: OrderFormProps) {
  const row = 'flex h-[21px] items-center';
  const label = 'w-[58px] shrink-0';
  const side = 'h-[18px] w-[33px] border border-[#90a0b0] bg-[#f8f8f4]';
  return (
    <fieldset className="h-[125px] border border-[#a0a0a0] pl-[4px]">
      <legend className="ml-[6px] h-3 bg-[#ece9e0] pr-2 pl-[2px] leading-3">{title}</legend>
      <div className="flex">
        <div className="w-[172px] pt-[4px]">
          <div className={row}><label htmlFor={`${id}-code`} className={label}>证券代码:</label><input id={`${id}-code`} className={`${entry} w-[96px]`} /></div>
          <div className={row}>
            <span className={label}>证券名称:</span><span className="h-[20px] w-[50px] border-r border-b border-white" />
            <label className="ml-[4px] flex items-center gap-[4px]"><input type="checkbox" defaultChecked className="size-[12px] accent-[#486048]" />反手</label>
          </div>
          <div className={row}><label htmlFor={`${id}-price`} className={`${label} ${tone}`}>{verb}价格:</label><input id={`${id}-price`} className={`${entry} w-[78px]`} /><Spinner />元</div>
          <div className={row}><span className={label}>最大可{short}:</span><span className="h-[20px] w-[96px] border-r border-b border-white" /><span className="ml-[6px]">股</span></div>
          <div className={row}><label htmlFor={`${id}-amount`} className={`${label} ${tone}`}>{verb}数量:</label><input id={`${id}-amount`} className={`${entry} w-[78px]`} /><Spinner />股</div>
        </div>
        <div className="-mt-[2px] flex flex-col gap-[5px]">
          <button className={`${side} ${tone}`}>{quick[0]}</button>
          <button className={`${side} ${tone}`}>{quick[1]}</button>
          <button className={`${side} mt-[2px]`}>未锁</button>
          <button className={side}>全部</button>
          <button className={`${side} ${tone}`}>定时</button>
        </div>
      </div>
    </fieldset>
  );
}

function LoginDialog() {
  const row = 'flex items-center';
  const label = 'w-[57px] shrink-0 pr-[4px] text-right';
  const field = 'h-[20px] border border-[#7c987c] bg-[#c7edcc] px-[3px] outline-none';
  const drop = 'pointer-events-none absolute top-[1px] right-[1px] flex h-[18px] w-[19px] items-center justify-center rounded-sm border border-[#a8bce0] bg-[#c4d8f8] text-[#405880]';
  const dialogButton = 'h-[21px] w-[60px] border border-[#7890b0] bg-gradient-to-b from-white to-[#e8e8d8]';
  return (
    <form className="absolute top-[95px] left-[235px] h-[229px] w-[416px] rounded-[12px] border border-[#808080] bg-gradient-to-b from-[#f4f4f4] via-[#c8c8c8] via-15% to-[#f0f0f0] shadow-md">
      <div className="flex h-[28px] items-center justify-between pr-[13px] pl-[11px]">
        <h3 className="text-sm font-bold">添加帐号</h3>
        <button type="button" aria-label="关闭" className="size-[18px] rounded-full border border-[#999] bg-[#c4c4c4] text-lg leading-none font-bold text-white">×</button>
      </div>
      <div className="mr-[12px] ml-[10px] flex h-[164px] flex-col border border-[#808080] bg-gradient-to-b from-white via-[#d0d0d0] via-15% to-white pt-[17px] pl-[35px]">
        <div className={`${row} mb-[6px]`}>
          <label htmlFor="kind" className={label}>帐号类型:</label>
          <span className="relative"><select id="kind" className={`${field} w-[221px] appearance-none bg-white`}><option>客户号</option></select><span className={drop}><ChevronDown className="size-3" strokeWidth={4} /></span></span>
          <label className="ml-[3px] flex items-center gap-[3px]"><input type="checkbox" defaultChecked className="size-[12px] accent-[#486048]" />保护帐号</label>
        </div>
        <div className={`${row} mb-[5px]`}>
          <label htmlFor="client" className={label}>客户号</label>
          <span className="relative"><input id="client" defaultValue="|" className={`${field} w-[221px]`} /><span className={drop}><ChevronDown className="size-3" strokeWidth={4} /></span></span>
          <label className="ml-[3px] flex items-center gap-[3px]"><input type="checkbox" defaultChecked className="size-[12px] accent-[#486048]" />记住帐号</label>
        </div>
        <div className={`${row} mb-[5px]`}>
          <label htmlFor="secret" className={label}>交易密码:</label>
          <span className="relative"><input id="secret" type="password" className={`${field} w-[219px]`} /><Keyboard className="absolute top-[3px] right-[2px] size-[15px] bg-white text-[#5890c0]" /></span>
        </div>
        <div className={row}>
          <label htmlFor="captcha" className={label}>验 证 码:</label>
          <input id="captcha" className={`${field} w-[219px]`} />
          <span className="ml-[5px] flex w-[61px] justify-around bg-[#c0c0c0] text-base leading-[18px] text-black">
            {['5', '0', '9', '4'].map((d) => <span key={d}>{d}</span>)}
          </span>
        </div>
        <div className="mt-[12px] flex gap-[5px] pl-[141px]">
          <button type="button" className={dialogButton}>确定</button>
          <button type="button" className={dialogButton}>取消</button>
        </div>
      </div>
      <p className="mt-[6px] ml-[19px]">请输入帐号信息!</p>
    </form>
  );
}

const roundButton = 'flex size-[17px] items-center justify-center rounded-full border-2 border-[#888] bg-[#e8e8e8] text-[10px] leading-none font-bold text-[#555]';

function OrderWindow() {
  return (
    <section className="absolute top-[193px] left-[21px] flex h-[411px] w-[1004px] flex-col border-2 border-[#e4e2cc] bg-[#e8e8e6] text-black">
      <h2 className="h-[22px] shrink-0 bg-gradient-to-b from-[#cccca8] to-[#dcdabe] pl-[2px] text-[15px] leading-[22px] font-bold text-white">辅助区</h2>
      <div className="flex min-h-0 flex-1 pr-[3px] pl-[4px]">
        <TreePane />
        <div className="ml-[4px] flex min-w-0 flex-1 flex-col border-l border-[#999]">
          <div className="flex h-[32px] shrink-0 items-center border-b border-[#a0a0a0] bg-gradient-to-b from-[#d4d4d4] to-[#fcfcfc] pl-[3px]">
            <button className={`${bigButton} w-[40px]`}>刷新</button>
            <button className={`${bigButton} ml-[4px] w-[104px]`}>同步异地委托</button>
            <span className="ml-[76px]">VIP闪电手委托</span>
            <div className="ml-auto flex items-center gap-[4px]">
              <button className={`${bigButton} w-[40px] text-[#c81818]`}>锁定</button>
              <button className={`${bigButton} w-[40px]`}>系统</button>
              <button className={`${bigButton} w-[56px]`}>多帐号</button>
              <label className="relative mr-[2px]">
                <select aria-label="帐户" className="h-[21px] w-[198px] appearance-none border border-[#7c987c] bg-[#c7edcc] px-[2px]"><option>全部帐户(CTRL+0)</option></select>
                <span className="pointer-events-none absolute top-[2px] right-[2px] flex h-[17px] w-[18px] items-center justify-center border border-[#a8bce0] bg-[#c4d8f8] text-[#405880]"><ChevronDown className="size-3" strokeWidth={4} /></span>
              </label>
            </div>
            <div className="flex gap-[1px]">
              <button aria-label="最小化" className={roundButton}>−</button>
              <button aria-label="最大化" className={roundButton}>□</button>
              <button aria-label="关闭" className={roundButton}>✕</button>
            </div>
          </div>
          <div className="flex">
            <OrdersPane />
            <div className="flex min-w-0 flex-1 flex-col">
              <div className="flex h-[256px] bg-[#dcdcdc]">
                <div className="mt-[6px] w-[166px] border border-[#a0a0a0] bg-gradient-to-b from-[#dcdcdc] via-[#c8c8c8] via-20% to-[#e8e8e8] pt-[7px] pl-[4px] leading-[20px]">
                  <p>卖五</p><p>卖四</p>
                </div>
                <div className="flex flex-1 flex-col gap-[4px] bg-gradient-to-b from-[#dcdcdc] to-[#ececec]">
                  <OrderForm id="buy" title="买入【+】" verb="买入" short="买" tone="text-[#c81818]" quick={['追涨', '抄底']} />
                  <OrderForm id="sell" title="卖出【-】" verb="卖出" short="卖" tone="text-[#188028]" quick={['止盈', '止损']} />
                </div>
              </div>
              <HeaderRow cols={['证券名称', '证券数量', '可卖量', '今买量', '今卖量', '仓位差量', '最新市值', '当']} />
              <div className="flex-1 bg-white"><div className="ml-[6px] mr-[2px] mt-[2px] h-[18px] rounded-full border-2 border-[#301070] bg-[#fc0008]" /></div>
              <HScroll thumb="w-[186px]" />
            </div>
          </div>
          <p className="mt-[2px] flex gap-3 overflow-hidden border-t border-[#999] bg-white leading-[20px] whitespace-nowrap">
            <span>【+】-买入</span><span>【-】-卖出</span><span>【*】-光标移至撤单委托</span><span>【/、Z】-撤全部委托</span>
            <span>【X】撤买</span><span>【C】撤卖</span><span>【DEL】删除预埋单</span><span>【Ctrl+0..9】切换下单</span>
          </p>
        </div>
      </div>
      <LoginDialog />
    </section>
  );
}

/* ---------- status bar ---------- */

const indices = [
  ['上证', '2054.39', '12.21', '0.60%', '823.5亿'],
  ['深证', '7855.14', '66.67', '0.86%', '1445亿'],
  ['中小', '5103.42', '82.96', '1.65%', '695.7亿'],
  ['沪深', '2245.68', '13.79', '0.62%', '595.6亿'],
  ['创业', '1484.43', '22.91', '1.57%', '442.4亿'],
];

function StatusBar() {
  return (
    <footer className="flex h-[24px] items-center border-t border-b-[3px] border-t-white border-b-[#c8ccae] bg-[#ece9d8] text-[#222]">
      <span className="mx-[3px] size-[13px] border-2 border-[#d09820] bg-[#f8e080]" />
      {indices.map(([name, value, change, pct, amount]) => (
        <p key={name} className="flex w-[215px] whitespace-nowrap">
          <span className="w-[82px]">{name}<b className="text-[#b81c28]">{value}</b></span>
          <b className="w-[41px] text-[#b81c28]">{change}</b>
          <b className="w-[46px] text-[#b81c28]">{pct}</b>
          <span>{amount}</span>
        </p>
      ))}
      <svg viewBox="0 0 108 18" className="h-[18px] w-[108px] border-x border-[#aca899]">
        <path d="M5 11h46M5 15h46M57 11h46M57 15h46" stroke="#c02020" strokeWidth="2" strokeDasharray="6 1" />
        <path d="M25 3v7M76 3v7M79 4v5" stroke="#a04030" strokeWidth="2" />
      </svg>
      <span className="ml-[3px]">招商证券广州行情</span>
      <span className="ml-[6px]">VIP_招商广州2</span>
      <div className="mr-[4px] ml-auto flex items-center gap-[5px] text-[#707070]">
        <span className="h-[12px] w-[15px] border border-[#4878b0] bg-white text-center text-[9px] leading-[10px] text-[#d0a020]">=</span>
        <Mail className="size-[14px] fill-white text-[#7898b8]" />
        <span className="size-[12px] rounded bg-[#d8cc20] text-center text-[9px] leading-[12px]">↑</span>
        <RadioTower className="size-[14px]" />
        <ChevronsUp className="size-[14px]" strokeWidth={4} />
        <Pin className="size-[10px]" />
      </div>
    </footer>
  );
}

/* ---------- notes drawn over the workspace ---------- */

function Arrow({ from, to }: { from: [number, number]; to: [number, number] }) {
  const angle = Math.atan2(to[1] - from[1], to[0] - from[0]);
  const at = (back: number, across: number) =>
    `${to[0] - back * Math.cos(angle) - across * Math.sin(angle)},${to[1] - back * Math.sin(angle) + across * Math.cos(angle)}`;
  return (
    <g>
      <path d={`M${from.join(' ')} L${at(14, 0)}`} stroke="#d01c1c" strokeWidth="2" />
      <polygon points={`${to.join(',')} ${at(23, 6)} ${at(18, 0)} ${at(23, -6)}`} fill="#e81414" />
    </g>
  );
}

const callout = 'absolute rounded-[9px] border-2 border-[#2808a0] bg-[#fc0008] px-[5px] text-[22px] leading-[25px] whitespace-nowrap text-[#ffe8e8]';

function Notes() {
  return (
    <div className="pointer-events-none absolute inset-0 overflow-hidden">
      <svg viewBox="0 0 1919 1051" preserveAspectRatio="none" className="absolute inset-0 size-full" fill="none">
        <Arrow from={[1344, 134]} to={[1417, 148]} />
        <Arrow from={[1150, 392]} to={[1180, 366]} />
        <Arrow from={[112, 882]} to={[40, 960]} />
        <Arrow from={[682, 922]} to={[692, 994]} />
        <Arrow from={[790, 918]} to={[1248, 1019]} />
        <Arrow from={[1057, 951]} to={[876, 1010]} />
        <Arrow from={[1180, 958]} to={[1462, 1010]} />
        <Arrow from={[1748, 953]} to={[1747, 1009]} />
        <Arrow from={[1684, 124]} to={[1685, 61]} />
        <ellipse cx="1690" cy="35" rx="75" ry="25" stroke="#d81818" strokeWidth="2" />
        <ellipse cx="715" cy="1020" rx="168" ry="22" stroke="#b030b8" strokeWidth="3" />
        <ellipse cx="1300" cy="1034" rx="99" ry="16" stroke="#b030b8" strokeWidth="3" />
      </svg>
      <p className={`${callout} top-[118px] left-[1159px] py-[2px]`}>支持<b>[</b>扩展区<b>]</b>显示</p>
      <p className={`${callout} top-[388px] left-[1051px] py-[5px]`}>落地显示</p>
      <p className={`${callout} top-[827px] left-[111px] py-[2px]`}>此处设置在<b>T0002</b><br />—<b>stdqs.cfg</b></p>
      <p className={`${callout} top-[867px] left-[595px] py-[2px]`}>此<b>6</b>项在<b>embui.cfg</b><br />文件里设置</p>
      <p className={`${callout} top-[937px] left-[1057px] py-[2px]`}>两个分时图</p>
      <p className={`${callout} top-[919px] left-[1690px] py-[2px]`}><b>8</b>组行情信息</p>
      <p className="absolute top-[123px] left-[1625px] h-[47px] w-[127px] border-2 border-[#d02020] bg-white text-base leading-[15px] text-[#a81c1c]">设置调用，方便买卖</p>
      <p className="absolute top-[508px] left-[791px] font-['Open_Sans','Noto_Sans_CJK_SC',sans-serif] text-[26px] leading-[36px] font-bold whitespace-nowrap text-[#e80808]">股海网 Www.Guhai.Com.CN</p>
      <div className="absolute top-[2px] right-0 h-[55px] w-[222px] bg-[#e4e4e4] pl-[4px] whitespace-nowrap">
        <p className="flex h-[31px] items-center gap-[8px]"><b className="text-xl text-[#1c28f0]">股海网</b><span className="text-lg text-[#383838]">股票软件资源分享</span></p>
        <p className="font-['Open_Sans',sans-serif] text-[22px] leading-[18px] font-bold text-[#f04010]">Www.Guhai.com.cn</p>
      </div>
    </div>
  );
}

export default function App() {
  return (
    <div className="relative flex min-h-screen flex-col overflow-hidden bg-black font-['Liberation_Sans','Noto_Sans_CJK_SC',sans-serif] text-xs">
      <MenuBar />
      <NewsBar />
      <main className="flex flex-1">
        <div className="flex min-w-0 flex-1 flex-col">
          <DailyPanel />
          <IntradayPanel />
          <ChartFooter />
        </div>
        <StockList />
        <QuotePanel />
        <ToolStrip />
      </main>
      <StatusBar />
      <OrderWindow />
      <Notes />
    </div>
  );
}
